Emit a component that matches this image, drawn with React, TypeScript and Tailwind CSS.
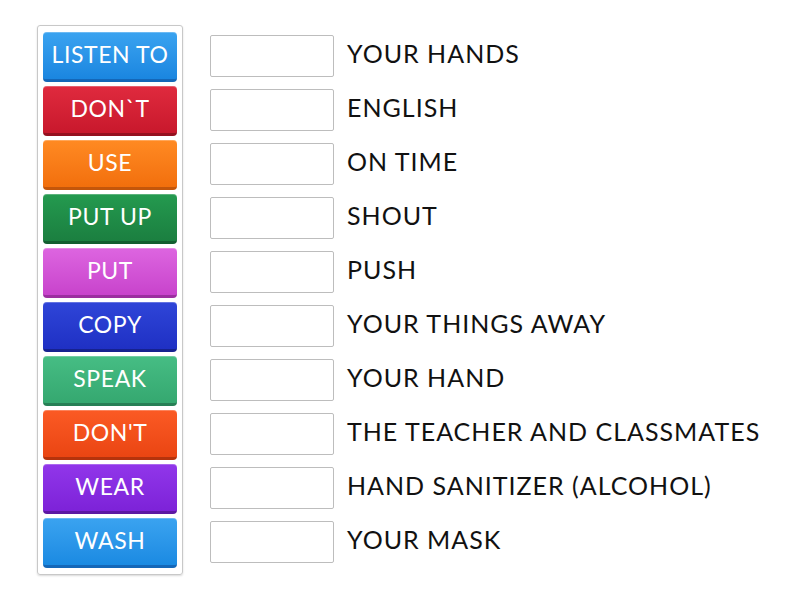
const items = [
  { label: 'LISTEN TO', cls: 'bg-gradient-to-b from-[#3aa3f0] to-[#1a86e0] border-b-[#1467b8]', text: 'YOUR HANDS' },
  { label: 'DON`T', cls: 'bg-gradient-to-b from-[#e02a3e] to-[#c8182c] border-b-[#95101f]', text: 'ENGLISH' },
  { label: 'USE', cls: 'bg-gradient-to-b from-[#ff8a22] to-[#f26f0c] border-b-[#c4560a]', text: 'ON TIME' },
  { label: 'PUT UP', cls: 'bg-gradient-to-b from-[#249a4f] to-[#1b7f40] border-b-[#135e30]', text: 'SHOUT' },
  { label: 'PUT', cls: 'bg-gradient-to-b from-[#dd65e0] to-[#c843cc] border-b-[#9c2ea0]', text: 'PUSH' },
  { label: 'COPY', cls: 'bg-gradient-to-b from-[#2f45d8] to-[#1f30c4] border-b-[#16228f]', text: 'YOUR THINGS AWAY' },
  { label: 'SPEAK', cls: 'bg-gradient-to-b from-[#46bd84] to-[#35a870] border-b-[#277f55]', text: 'YOUR HAND' },
  { label: "DON'T", cls: 'bg-gradient-to-b from-[#fb5a24] to-[#ea4512] border-b-[#b5330c]', text: 'THE TEACHER AND CLASSMATES' },
  { label: 'WEAR', cls: 'bg-gradient-to-b from-[#9136ea] to-[#7d22d8] border-b-[#5c18a3]', text: 'HAND SANITIZER (ALCOHOL)' },
  { label: 'WASH', cls: 'bg-gradient-to-b from-[#3aa3f0] to-[#1a8ae2] border-b-[#1467b8]', text: 'YOUR MASK' },
];

export default function App() {
  return (
    <div className="w-[800px] h-[600px] bg-white flex pt-[25px] pl-[37px]" style={{ fontFamily: 'Lato, "Open Sans", sans-serif' }}>
      <div className="w-[146px] h-[550px] border border-[#c8c8c8] rounded-[3px] flex flex-col gap-[4px] px-[5px] pt-[6px] shadow-[0_1px_2px_rgba(0,0,0,0.15)]">
        {items.map((it) => (
          <div
            key={it.label}
            className={`h-[50px] rounded-[4px] border-b-[3px] flex items-center justify-center text-white text-[23px] tracking-[0.6px] leading-none pb-[2px] shadow-[inset_0_1px_0_rgba(255,255,255,0.25)] ${it.cls}`}
          >
            {it.label}
          </div>
        ))}
      </div>
      <div className="flex flex-col gap-[12px] pl-[27px] pt-[10px]">
        {items.map((it) => (
          <div key={it.text} className="h-[42px] flex items-center">
            <div className="w-[124px] h-[42px] border border-[#bdbdbd] rounded-[2px] bg-white" />
            <span className="ml-[13px] mb-[5px] text-[25px] tracking-[1px] text-[#111] leading-none whitespace-nowrap">{it.text}</span>
          </div>
        ))}
      </div>
    </div>
  );
}
